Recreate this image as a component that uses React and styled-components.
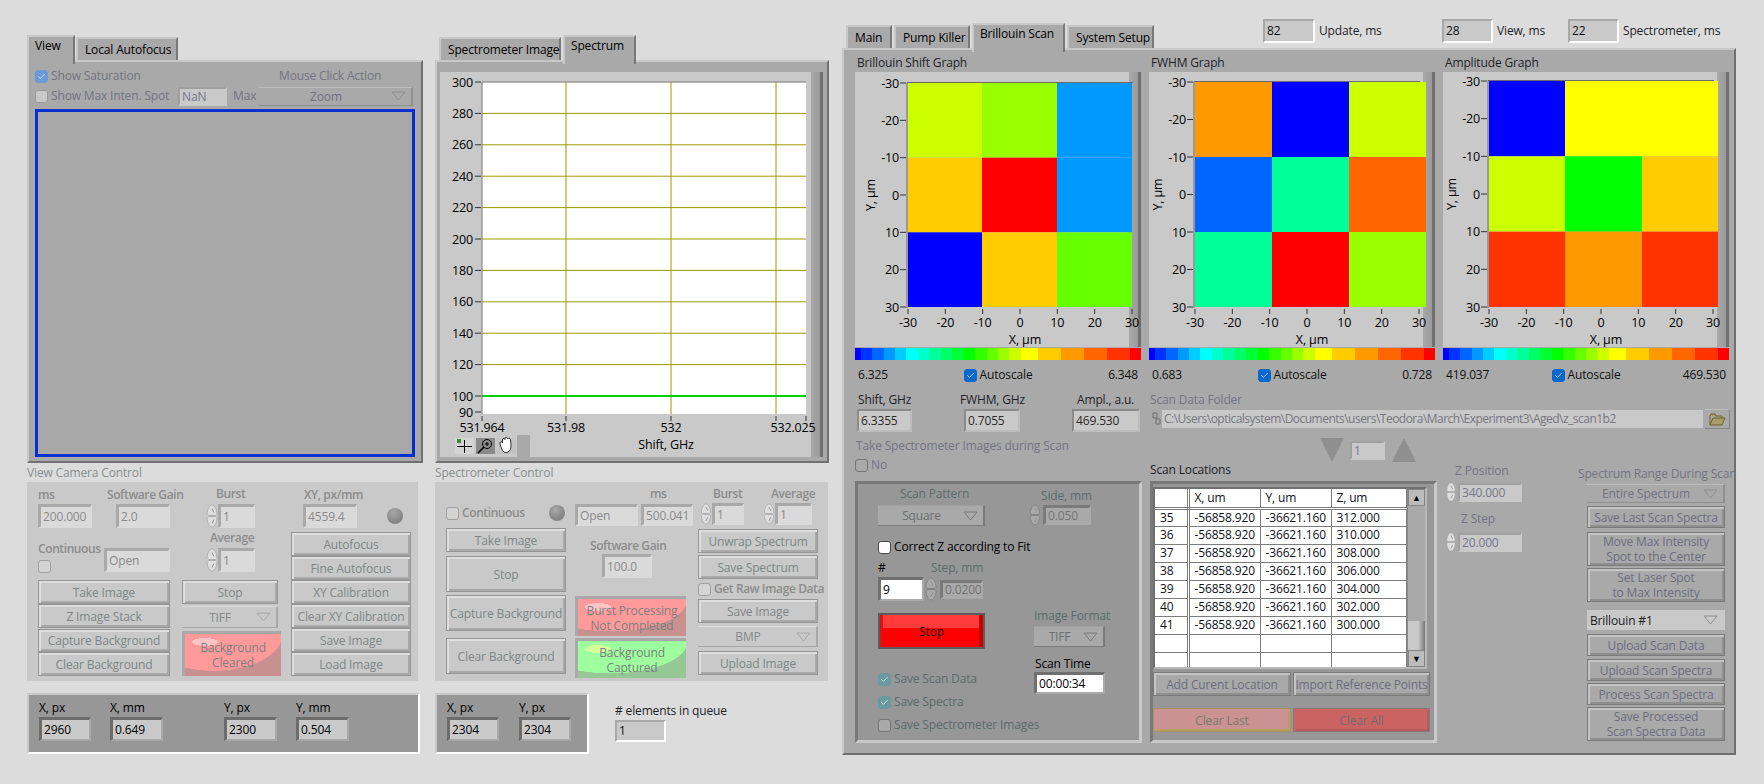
import React from "react";
import styled, { createGlobalStyle } from "styled-components";
import { Check } from "lucide-react";

const Global = createGlobalStyle`
  html, body { margin: 0; padding: 0; background: #dcdcdc; }
  body { font-family: "Open Sans", "Noto Sans", sans-serif; font-size: 12px; letter-spacing: -0.15px; color: #000; }
  * { box-sizing: border-box; }
`;

const Page = styled.div`
  width: 1764px;
  height: 784px;
  display: flex;
  align-items: flex-start;
  overflow: hidden;
`;

const Column = styled.div`
  width: ${(p) => p.$w}px;
  margin-left: ${(p) => p.$ml}px;
  margin-top: ${(p) => p.$mt}px;
  flex: none;
`;

const Stack = styled.div`
  display: flex;
  flex-direction: column;
  flex: none;
  width: ${(p) => (p.$w ? `${p.$w}px` : "auto")};
  gap: ${(p) => p.$gap || 0}px;
  margin-top: ${(p) => p.$mt || 0}px;
  margin-left: ${(p) => p.$ml || 0}px;
`;

const Row = styled.div`
  display: flex;
  flex: none;
  align-items: ${(p) => p.$align || "center"};
  gap: ${(p) => p.$gap || 0}px;
  margin-top: ${(p) => p.$mt || 0}px;
  margin-left: ${(p) => p.$ml || 0}px;
  height: ${(p) => (p.$h ? `${p.$h}px` : "auto")};
`;

/* ---- tabs ---- */
const TabRow = styled.div`
  display: flex;
  align-items: flex-end;
  height: ${(p) => p.$h || 25}px;
  gap: ${(p) => p.$gap ?? 1}px;
  padding-left: ${(p) => p.$pl || 0}px;
  flex: none;
`;

const Tab = styled.div`
  width: ${(p) => p.$w}px;
  height: ${(p) => (p.$active ? 29 : 23)}px;
  margin-bottom: ${(p) => (p.$active ? -4 : 0)}px;
  padding: ${(p) => (p.$active ? "1px 0 0 6px" : "3px 0 0 7px")};
  background: #a9a9a9;
  border-top: 2px solid #c8c8c8;
  border-left: 2px solid #c8c8c8;
  border-right: 2px solid #787878;
  line-height: 16px;
  white-space: nowrap;
  position: relative;
  z-index: ${(p) => (p.$active ? 2 : 0)};
`;

const TabPanel = styled.div`
  height: ${(p) => p.$h}px;
  width: ${(p) => p.$w}px;
  background: #a9a9a9;
  border-top: 2px solid #c8c8c8;
  border-left: 2px solid #c8c8c8;
  border-right: 2px solid #707070;
  border-bottom: 2px solid #707070;
  padding: ${(p) => p.$pad};
`;

/* ---- labels ---- */
const labelColor = {
  dark: "#000",
  soft: "#1f1f28",
  mid: "#747482",
  dim: "#5d6b6b",
  faint: "#8b8b8b",
  strong: "#8c8c8c",
};

const Label = styled.div`
  height: ${(p) => p.$h || 14}px;
  line-height: 14px;
  white-space: nowrap;
  color: ${(p) => labelColor[p.$tone || "dark"]};
  font-weight: ${(p) => (p.$tone === "strong" ? 600 : 400)};
  letter-spacing: ${(p) => (p.$tone === "strong" ? "-0.4px" : "inherit")};
  margin-left: ${(p) => p.$ml || 0}px;
  margin-top: ${(p) => p.$mt || 0}px;
  margin-bottom: ${(p) => p.$mb ?? 2}px;
  width: ${(p) => (p.$w ? `${p.$w}px` : "auto")};
`;

/* ---- numeric fields ---- */
const fieldKinds = {
  faded: { bg: "#dadada", fg: "#8a8a8a", tl: "#a9a9a9", br: "transparent", tw: 3 },
  dark: { bg: "#c9c9c9", fg: "#000", tl: "#6c6c6c", br: "#a8a8a8", tw: 3 },
  status: { bg: "#c9c9c9", fg: "#111", tl: "#a8a8a8", br: "#fff", tw: 2 },
  readout: { bg: "#c9c9c9", fg: "#2a2a2a", tl: "#8b8b8b", br: "#bdbdbd", tw: 2 },
  grayed: { bg: "#c9c9c9", fg: "#77778a", tl: "#a0a0a0", br: "transparent", tw: 2 },
  white: { bg: "#fff", fg: "#000", tl: "#6f6f6f", br: "#a9a9a9", tw: 3 },
  sunk: { bg: "#a9a9a9", fg: "#737373", tl: "#7a7a7a", br: "transparent", tw: 3 },
};

const FieldBox = styled.div`
  width: ${(p) => p.$w}px;
  height: ${(p) => p.$h || 24}px;
  flex: none;
  padding-left: 2px;
  line-height: ${(p) => (p.$h || 24) - fieldKinds[p.$kind].tw - 2}px;
  background: ${(p) => fieldKinds[p.$kind].bg};
  color: ${(p) => fieldKinds[p.$kind].fg};
  border-style: solid;
  border-width: ${(p) => fieldKinds[p.$kind].tw}px 2px 2px ${(p) => fieldKinds[p.$kind].tw}px;
  border-color: ${(p) => fieldKinds[p.$kind].tl} ${(p) => fieldKinds[p.$kind].br} ${(p) => fieldKinds[p.$kind].br} ${(p) => fieldKinds[p.$kind].tl};
  margin-left: ${(p) => p.$ml || 0}px;
  margin-top: ${(p) => p.$mt || 0}px;
  white-space: nowrap;
  overflow: hidden;
`;

const SpinIcon = styled.svg`
  width: 12px;
  height: ${(p) => p.$h || 24}px;
  flex: none;
`;

const Spin = ({ h = 24, fill = "#dedede", edge = "#a4a4a4" }) => (
  <SpinIcon $h={h} viewBox="0 0 12 24">
    <path d="M1 10 C1 5 4 1 6 1 C8 1 11 5 11 10 C11 11 10 11.5 9 11.5 L3 11.5 C2 11.5 1 11 1 10Z" fill={fill} stroke={edge} strokeWidth="0.8" />
    <path d="M1 14 C1 19 4 23 6 23 C8 23 11 19 11 14 C11 13 10 12.5 9 12.5 L3 12.5 C2 12.5 1 13 1 14Z" fill={fill} stroke={edge} strokeWidth="0.8" />
    <path d="M6 4.5 L8 8.5 M6 19.5 L8 15.5" stroke="#8f8f8f" strokeWidth="1" />
  </SpinIcon>
);

/* ---- buttons ---- */
const buttonTones = {
  light: { bg: "#c9c9c9", line: "#959595", hi: "#dedede", lo: "#a9a9a9", fg: "#7f8686" },
  mid: { bg: "#a9a9a9", line: "#7a7a7a", hi: "#c4c4c4", lo: "#8f8f8f", fg: "#6d6d80" },
  pale: { bg: "#ca9292", line: "#a39460", hi: "#ca9292", lo: "#b5a060", fg: "#7b7a70" },
  rose: { bg: "#cb6363", line: "#8c7777", hi: "#cb6363", lo: "#b35a5a", fg: "#736d6d" },
};

const Button = styled.div`
  width: ${(p) => (p.$w ? `${p.$w}px` : "100%")};
  height: ${(p) => p.$h || 24}px;
  flex: none;
  display: flex;
  align-items: center;
  justify-content: center;
  text-align: center;
  line-height: 15px;
  white-space: nowrap;
  margin-top: ${(p) => p.$mt || 0}px;
  background: ${(p) => buttonTones[p.$tone].bg};
  color: ${(p) => buttonTones[p.$tone].fg};
  border: 1px solid ${(p) => buttonTones[p.$tone].line};
  box-shadow: inset 2px 2px 0 ${(p) => buttonTones[p.$tone].hi}, inset -2px -2px 0 ${(p) => buttonTones[p.$tone].lo};
`;

const StopButton = styled.div`
  width: 107px;
  height: 36px;
  margin-top: 12px;
  display: flex;
  align-items: center;
  justify-content: center;
  color: #111;
  border: 2px solid #5c5c5c;
  background: linear-gradient(#ff3b3b 0 13px, #ff0000 13px);
  box-shadow: inset -4px 0 0 #c80000, inset 3px 0 0 #e01010;
`;

const RingBox = styled.div`
  width: ${(p) => (p.$w ? `${p.$w}px` : "100%")};
  height: ${(p) => p.$h || 22}px;
  flex: none;
  display: flex;
  align-items: center;
  justify-content: ${(p) => (p.$start ? "flex-start" : "center")};
  position: relative;
  padding-right: 18px;
  padding-left: ${(p) => (p.$start ? 3 : 0)}px;
  margin-top: ${(p) => p.$mt || 0}px;
  margin-left: ${(p) => p.$ml || 0}px;
  color: ${(p) => p.$fg};
  background: ${(p) => p.$bg};
  border-top: 1px solid ${(p) => p.$hi};
  border-bottom: 1px solid ${(p) => p.$lo};
  border-right: 2px solid ${(p) => p.$lo};
  white-space: nowrap;
`;

const RingArrow = styled.svg`
  position: absolute;
  right: 5px;
  top: 50%;
  margin-top: -5px;
  width: 15px;
  height: 10px;
`;

const ringTones = {
  light: { $fg: "#858a8a", $bg: "#c9c9c9", $hi: "#dcdcdc", $lo: "#a8a8a8" },
  sunk: { $fg: "#6a7070", $bg: "#a9a9a9", $hi: "#a0a0a0", $lo: "#7a7a7a" },
  mid: { $fg: "#737380", $bg: "#a9a9a9", $hi: "#bcbcbc", $lo: "#8f8f8f" },
  value: { $fg: "#1c1c1c", $bg: "#c9c9c9", $hi: "#c9c9c9", $lo: "#c9c9c9" },
};

const Ring = ({ text, tone = "light", ...rest }) => (
  <RingBox {...ringTones[tone]} {...rest}>
    {text}
    <RingArrow viewBox="0 0 15 10">
      <path d="M1 1 L14 1 L7.5 9Z" fill="none" stroke={tone === "value" ? "#8f8f8f" : ringTones[tone].$lo} strokeWidth="1" />
    </RingArrow>
  </RingBox>
);

/* ---- checkboxes ---- */
const boxKinds = {
  off: { bg: "#d4d4d4", line: "#a0a0a0" },
  paleoff: { bg: "#c9c9c9", line: "#9a9a9a" },
  dimon: { bg: "#6a9ad8", line: "#6a9ad8" },
  on: { bg: "#0a67cc", line: "#0a67cc" },
  white: { bg: "#fff", line: "#4a4a4a" },
  teal: { bg: "#6a9a9e", line: "#6a9a9e" },
  sunk: { bg: "#a9a9a9", line: "#767676" },
};

const TickBox = styled.span`
  width: 13px;
  height: 13px;
  flex: none;
  border-radius: 3px;
  display: flex;
  align-items: center;
  justify-content: center;
  margin-right: 3px;
  background: ${(p) => boxKinds[p.$kind].bg};
  border: 1px solid ${(p) => boxKinds[p.$kind].line};
`;

const Tick = ({ kind }) => (
  <TickBox $kind={kind}>
    {["dimon", "on", "teal"].includes(kind) && <Check size={9} color="#e8f0f8" strokeWidth={2} />}
  </TickBox>
);

const Led = styled.span`
  width: 16px;
  height: 16px;
  flex: none;
  border-radius: 50%;
  margin-left: ${(p) => p.$ml || 0}px;
  background: radial-gradient(circle at 40% 30%, #a8a8a8, #858585 65%);
`;

/* ---- panels under the tabs ---- */
const PanelCaption = styled.div`
  height: 14px;
  line-height: 14px;
  margin-top: 3px;
  margin-bottom: 2px;
  color: #8a8f8f;
  white-space: nowrap;
`;

const ControlBox = styled.div`
  width: ${(p) => p.$w}px;
  height: 199px;
  background: #c9c9c9;
  display: flex;
  padding: 5px 0 0 11px;
`;

const CoordBox = styled.div`
  width: ${(p) => p.$w}px;
  height: 61px;
  flex: none;
  display: flex;
  padding: 6px 0 0 10px;
  background: #979797;
  border: 2px solid;
  border-color: #c8c8c8 #fff #fff #c8c8c8;
`;

const ImageDisplay = styled.div`
  width: 380px;
  height: 348px;
  margin-top: 3px;
  background: #a8a8a8;
  border: 3px solid #0030cf;
`;

/* ---- indicator lamps ---- */
const lampTones = {
  pink: { a: "#ff9a9a", b: "#c99090", c: "#ffc4c4" },
  green: { a: "#9dff9d", b: "#96c896", c: "#d4ff9c" },
};

const Lamp = styled.div`
  width: ${(p) => p.$w}px;
  height: ${(p) => p.$h}px;
  flex: none;
  margin-top: ${(p) => p.$mt || 0}px;
  display: flex;
  align-items: center;
  justify-content: center;
  text-align: center;
  line-height: 15px;
  color: #7c8080;
  border-style: solid;
  border-width: 3px 0 0 3px;
  border-color: #a9a9a9;
  background:
    radial-gradient(ellipse 13px 4px at 20px 8px, ${(p) => lampTones[p.$tone].c} 98%, transparent 100%),
    radial-gradient(ellipse 72% 88% at 30% 0%, ${(p) => lampTones[p.$tone].a} 99%, ${(p) => lampTones[p.$tone].b} 100%);
`;

const Field = ({ label, value, w, h, kind = "faded", tone, lm, gapB }) => (
  <Stack $w={w}>
    {label && <Label $tone={tone} $ml={lm} $mb={gapB}>{label}</Label>}
    <FieldBox $w={w} $h={h} $kind={kind}>{value}</FieldBox>
  </Stack>
);

/* ---- left column ---- */
const CameraControls = () => (
  <ControlBox $w={391}>
    <Stack $w={132}>
      <Row $align="flex-start" $gap={24} $mt={1}>
        <Field label="ms" value="200.000" w={54} tone="strong" />
        <Field label="Software Gain" value="2.0" w={54} tone="strong" lm={-9} />
      </Row>
      <Row $align="flex-start" $mt={14} $h={36}>
        <Stack $w={66}>
          <Label $tone="strong" $mb={4}>Continuous</Label>
          <Tick kind="off" />
        </Stack>
        <FieldBox $w={66} $kind="faded" $mt={6}>Open</FieldBox>
      </Row>
      <Stack $mt={2}>
        <Button $tone="light">Take Image</Button>
        <Button $tone="light">Z Image Stack</Button>
        <Button $tone="light" $mt={1} $h={23}>Capture Background</Button>
        <Button $tone="light">Clear Background</Button>
      </Stack>
    </Stack>
    <Stack $w={99} $ml={12}>
      <Label $tone="strong" $ml={34}>Burst</Label>
      <Row $ml={24} $mt={1}><Spin /><FieldBox $w={37} $kind="faded">1</FieldBox></Row>
      <Label $tone="strong" $ml={28} $mt={3}>Average</Label>
      <Row $ml={24} $mt={1}><Spin /><FieldBox $w={37} $kind="faded">1</FieldBox></Row>
      <Button $tone="light" $mt={8} $w={96}>Stop</Button>
      <Ring text="TIFF" $w={96} $mt={2} />
      <Lamp $w={99} $h={45} $tone="pink" $mt={3}>Background<br />Cleared</Lamp>
    </Stack>
    <Stack $w={120} $ml={10}>
      <Label $tone="strong" $ml={13} $mt={1}>XY, px/mm</Label>
      <Row $ml={12}><FieldBox $w={54} $kind="faded">4559.4</FieldBox><Led $ml={30} /></Row>
      <Stack $mt={4}>
        {["Autofocus", "Fine Autofocus", "XY Calibration", "Clear XY Calibration", "Save Image", "Load Image"].map((t) => (
          <Button key={t} $tone="light">{t}</Button>
        ))}
      </Stack>
    </Stack>
  </ControlBox>
);

/* ---- middle column ---- */
const SpectroControls = () => (
  <ControlBox $w={393}>
    <Stack $w={120}>
      <Row $mt={18} $h={16}>
        <Tick kind="off" />
        <Label $tone="strong" $mb={0} $w={87}>Continuous</Label>
        <Led />
      </Row>
      <Button $tone="light" $mt={7}>Take Image</Button>
      <Button $tone="light" $mt={4} $h={36}>Stop</Button>
      <Button $tone="light" $mt={3} $h={36}>Capture Background</Button>
      <Button $tone="light" $mt={7} $h={36}>Clear Background</Button>
    </Stack>
    <Stack $w={118} $ml={9}>
      <Label $tone="strong" $ml={75}>ms</Label>
      <Row $mt={1} $gap={3}>
        <FieldBox $w={63} $h={22} $kind="faded">Open</FieldBox>
        <FieldBox $w={52} $h={22} $kind="faded">500.041</FieldBox>
      </Row>
      <Label $tone="strong" $ml={15} $mt={13} $mb={1}>Software Gain</Label>
      <FieldBox $w={50} $kind="faded" $ml={27}>100.0</FieldBox>
      <Lamp $w={111} $h={40} $tone="pink" $mt={18}>Burst Processing<br />Not Completed</Lamp>
      <Lamp $w={111} $h={40} $tone="green" $mt={2}>Background<br />Captured</Lamp>
    </Stack>
    <Stack $w={120} $ml={5}>
      <Row $align="flex-start">
        <Stack $w={65}>
          <Label $tone="strong" $ml={15}>Burst</Label>
          <Row $ml={2}><Spin h={22} /><FieldBox $w={32} $h={22} $kind="faded">1</FieldBox></Row>
        </Stack>
        <Stack>
          <Label $tone="strong" $ml={8}>Average</Label>
          <Row><Spin h={22} /><FieldBox $w={37} $h={22} $kind="faded">1</FieldBox></Row>
        </Stack>
      </Row>
      <Button $tone="light" $mt={4}>Unwrap Spectrum</Button>
      <Button $tone="light" $mt={2}>Save Spectrum</Button>
      <Row $mt={3} $h={14}>
        <Tick kind="off" />
        <Label $tone="strong" $mb={0}>Get Raw Image Data</Label>
      </Row>
      <Button $tone="light" $mt={3}>Save Image</Button>
      <Ring text="BMP" $h={21} $mt={3} />
      <Button $tone="light" $mt={4}>Upload Image</Button>
    </Stack>
  </ControlBox>
);

const GraphFrame = styled.div`
  width: ${(p) => p.$w}px;
  height: ${(p) => p.$h}px;
  flex: none;
  background: linear-gradient(to left, #707070 3px, #9a9a9a 3px, #a9a9a9 12px, #c9c9c9 12px);
`;

const spectrumY = [300, 280, 260, 240, 220, 200, 180, 160, 140, 120, 100];
const spectrumAt = (i) => 10 + i * 31.4;

const SpectrumChart = () => (
  <GraphFrame $w={383} $h={385}>
    <svg width="383" height="385" fontSize="12.5" fontFamily="Open Sans, sans-serif">
      <rect x="42" y="10" width="324" height="332" fill="#fff" />
      <path d="M42 10 H366 M42 10 V342" stroke="#777" fill="none" />
      {spectrumY.map((v, i) => (
        <g key={v}>
          <line x1="35" x2="41" y1={spectrumAt(i)} y2={spectrumAt(i)} stroke="#333" />
          {i > 0 && i < 10 && <line x1="42" x2="366" y1={spectrumAt(i)} y2={spectrumAt(i)} stroke="#9a9a00" />}
          <text x="33" y={spectrumAt(i) + 4.5} textAnchor="end">{v}</text>
        </g>
      ))}
      <line x1="35" x2="41" y1="340" y2="340" stroke="#333" />
      <text x="33" y="345" textAnchor="end">90</text>
      {[126, 231, 336].map((x) => (
        <line key={x} x1={x} x2={x} y1="10" y2="342" stroke="#9a9a00" />
      ))}
      <line x1="42" x2="366" y1="324" y2="324" stroke="#00d000" strokeWidth="2" />
      {[42, 126, 231, 336, 366].map((x) => (
        <line key={x} x1={x} x2={x} y1="344" y2="349" stroke="#333" />
      ))}
      <text x="42" y="360" textAnchor="middle">531.964</text>
      <text x="126" y="360" textAnchor="middle">531.98</text>
      <text x="231" y="360" textAnchor="middle">532</text>
      <text x="353" y="360" textAnchor="middle">532.025</text>
      <text x="226" y="377" textAnchor="middle">Shift, GHz</text>
      {/* graph palette */}
      <path d="M15 363 H90 V385 H15Z" fill="#a9a9a9" />
      <rect x="15" y="363" width="62" height="22" fill="#c9c9c9" />
      <rect x="15" y="366" width="19" height="16" fill="#d4d4d4" />
      <rect x="36" y="366" width="19" height="16" fill="#8a8a8a" />
      <rect x="57" y="366" width="19" height="16" fill="#c4c4c4" />
      <path d="M24.5 368 V381 M17 374.5 H32" stroke="#000" />
      <rect x="17" y="367" width="4" height="4" fill="#3c8a3c" />
      <circle cx="47" cy="372" r="4.5" fill="none" stroke="#000" />
      <path d="M47 370 V374 M45 372 H49" stroke="#000" />
      <path d="M44 375 L38 381" stroke="#000" strokeWidth="1.6" />
      <path d="M60 372 C60 369 62 369 62.5 371 L62.5 367.5 C63 366 64.5 366 65 367.5 L65 366 C65.5 365 67 365 67.5 366.5 L68 367 C68.5 366 70 366 70.5 367.5 L71 373 C71 378 69 380.5 66 380.5 C63 380.5 62 378 60 372Z" fill="#fff" stroke="#000" strokeWidth="0.8" />
    </svg>
  </GraphFrame>
);

/* ---- right column: intensity graphs ---- */
const Scale = styled.div`
  display: flex;
  height: 12px;
  width: 286px;
  margin-top: 1px;
`;

const ScaleStep = styled.span`
  flex: ${(p) => p.$n} 0 0;
  background: ${(p) => p.$c};
`;

const scaleSteps = [
  ["#0000ff", 0.5], ["#0033ff", 1], ["#0066ff", 1], ["#0099ff", 1], ["#00ccff", 1], ["#00ffff", 1],
  ["#00ffcc", 1], ["#00ff99", 1], ["#00ff66", 1], ["#00ff33", 1], ["#00ff00", 1],
  ["#33ff00", 1], ["#66ff00", 1], ["#99ff00", 1], ["#ccff00", 1], ["#ffff00", 1.5],
  ["#ffcc00", 2], ["#ff9900", 2], ["#ff6600", 2], ["#ff3300", 2], ["#ff0000", 1],
];

const Readings = styled.div`
  width: 286px;
  height: 16px;
  margin-top: 7px;
  padding: 0 3px;
  display: flex;
  justify-content: space-between;
  align-items: center;
  line-height: 16px;
  color: #111;
`;

const Middle = styled.div`
  display: flex;
  align-items: center;
`;

const axisTicks = [-30, -20, -10, 0, 10, 20, 30];

const IntensityGraph = ({ title, cells, low, high, px, pt = 11, splits }) => {
  const px2 = px + 224;
  const pos = (i, a, b) => a + ((b - a) * i) / 6;
  const bottom = 235;
  const ys = [pt, pt + (bottom - pt) / 3, pt + (2 * (bottom - pt)) / 3, bottom];
  return (
    <Stack $w={286}>
      <Label $tone="soft" $ml={2} $mb={0} $mt={6} $h={16}>{title}</Label>
      <GraphFrame $w={286} $h={275}>
        <svg width="286" height="275" fontSize="12.5" fontFamily="Open Sans, sans-serif">
          {cells.map((row, r) =>
            row.map((c, k) => (
              <rect key={`${r}${k}`} x={splits[k]} y={ys[r]} width={splits[k + 1] - splits[k]} height={ys[r + 1] - ys[r]} fill={c} />
            ))
          )}
          <path d={`M${px - 1} ${bottom + 1} V${pt - 0.5} H${px2 + 1}`} stroke="#6a6a6a" fill="none" />
          {axisTicks.map((v, i) => {
            const y = pos(i, pt, bottom);
            const x = pos(i, px, px2);
            return (
              <g key={v}>
                <line x1={px - 8} x2={px - 2} y1={y} y2={y} stroke="#333" />
                <text x={px - 9} y={y + 4.5} textAnchor="end">{v}</text>
                <line x1={x} x2={x} y1={bottom + 2} y2={bottom + 7} stroke="#333" />
                <text x={x} y={bottom + 20} textAnchor="middle">{v}</text>
              </g>
            );
          })}
          <text x={px + 117} y={bottom + 37} textAnchor="middle">X, µm</text>
          <text transform={`translate(${px - 33} ${(pt + bottom) / 2}) rotate(-90)`} textAnchor="middle">Y, µm</text>
        </svg>
      </GraphFrame>
      <Scale>
        {scaleSteps.map(([c, n]) => <ScaleStep key={c} $c={c} $n={n} />)}
      </Scale>
      <Readings>
        <span>{low}</span>
        <Middle><Tick kind="on" />Autoscale</Middle>
        <span>{high}</span>
      </Readings>
    </Stack>
  );
};

const graphs = [
  {
    title: "Brillouin Shift Graph", low: "6.325", high: "6.348", px: 53, pt: 11,
    splits: [53, 127, 202, 277],
    cells: [["#ccff00", "#99ff00", "#0099ff"], ["#ffcc00", "#ff0000", "#0099ff"], ["#0000ff", "#ffcc00", "#66ff00"]],
  },
  {
    title: "FWHM Graph", low: "0.683", high: "0.728", px: 46, pt: 10,
    splits: [46, 123, 200, 277],
    cells: [["#ff9900", "#0000ff", "#ccff00"], ["#0066ff", "#00ff99", "#ff6600"], ["#00ff99", "#ff0000", "#99ff00"]],
  },
  {
    title: "Amplitude Graph", low: "419.037", high: "469.530", px: 46, pt: 9,
    splits: [46, 122, 199, 275],
    cells: [["#0000ff", "#ffff00", "#ffff00"], ["#ccff00", "#00ff00", "#ffcc00"], ["#ff3300", "#ff9900", "#ff3300"]],
  },
];

/* ---- right column: scan area ---- */
const SunkBox = styled.div`
  width: ${(p) => p.$w}px;
  height: 262px;
  flex: none;
  background: #979797;
  border-style: solid;
  border-width: 3px;
  border-color: #787878 #c9c9c9 #c9c9c9 #787878;
  padding: ${(p) => p.$pad};
  display: flex;
`;

const TableFrame = styled.div`
  display: flex;
  width: 274px;
  height: 182px;
  border: 2px solid;
  border-color: #707070 #b8b8b8 #b8b8b8 #707070;
  background: #fff;
  overflow: hidden;
`;

const Table = styled.table`
  border-collapse: collapse;
  table-layout: fixed;
  width: 252px;
  height: 178px;
  flex: none;
  color: #101018;
  th, td {
    height: 18px;
    padding: 0 0 0 5px;
    font-weight: 400;
    text-align: left;
    white-space: nowrap;
    border-right: 1px solid #7c7c7c;
    border-bottom: 1px solid #7c7c7c;
    line-height: 16px;
  }
  th { border-bottom: 3px double #7c7c7c; height: 19px; }
  th:nth-child(1) { width: 33px; border-right: 3px double #7c7c7c; }
  td:nth-child(1) { border-right: 3px double #7c7c7c; }
  th:nth-child(2) { width: 72px; }
  th:nth-child(3) { width: 71px; }
`;

const ScrollBar = styled.div`
  width: 18px;
  flex: none;
  display: flex;
  flex-direction: column;
  background: #a9a9a9;
  border-left: 1px solid #8a8a8a;
`;

const ScrollTrack = styled.div`
  flex: 1;
  display: flex;
  align-items: flex-end;
`;

const ScrollThumb = styled.div`
  width: 100%;
  height: 29px;
  background: linear-gradient(to right, #c9c9c9 60%, #777);
`;

const ScrollArrow = styled.div`
  height: 17px;
  display: flex;
  align-items: center;
  justify-content: center;
  font-size: 9px;
  background: #bcbcbc;
  border: 1px solid #858585;
`;

const scanRows = ["35|312.000", "36|310.000", "37|308.000", "38|306.000", "39|304.000", "40|302.000", "41|300.000"];

const TriangleIcon = styled.svg`
  width: 24px;
  height: 24px;
  flex: none;
  margin-left: ${(p) => p.$ml || 0}px;
`;

const FolderField = styled.div`
  width: 541px;
  height: 18px;
  margin-left: 1px;
  padding-left: 2px;
  line-height: 18px;
  letter-spacing: -0.52px;
  color: #77777f;
  background: #c9c9c9;
  white-space: nowrap;
  overflow: hidden;
`;

const FolderButton = styled.div`
  width: 25px;
  height: 20px;
  margin-left: 2px;
  display: flex;
  align-items: center;
  justify-content: center;
  background: #a9a9a9;
  border-right: 1px solid #858585;
  border-bottom: 1px solid #858585;
  border-top: 1px solid #bdbdbd;
`;

const PathChip = styled.svg`
  width: 11px;
  height: 18px;
  flex: none;
`;

const ScanArea = () => (
  <Row $align="flex-start" $mt={6}>
    <Stack $w={287}>
      <Label $tone="mid" $ml={1} $mt={1} $mb={5}>Take Spectrometer Images during Scan</Label>
      <Row $h={14}>
        <Tick kind="sunk" />
        <Label $tone="mid" $mb={0}>No</Label>
      </Row>
      <Stack $mt={9}>
        <SunkBox $w={287} $pad="3px 0 0 20px">
          <Stack $w={151}>
            <Label $tone="dim" $ml={22}>Scan Pattern</Label>
            <Ring text="Square" tone="sunk" $w={107} $h={21} $mt={2} />
            <Row $mt={14} $h={14}>
              <Tick kind="white" />
              <Label $mb={0}>Correct Z according to Fit</Label>
            </Row>
            <Row $align="flex-start" $mt={7}>
              <Stack $w={46}>
                <Label>#</Label>
                <FieldBox $w={46} $kind="white">9</FieldBox>
              </Stack>
              <Stack $mt={16} $ml={1}><Spin h={24} fill="#a9a9a9" edge="#7c7c7c" /></Stack>
              <Stack>
                <Label $tone="dim" $ml={-6} $mb={5}>Step, mm</Label>
                <FieldBox $w={43} $h={19} $kind="sunk" $ml={3}>0.0200</FieldBox>
              </Stack>
            </Row>
            <StopButton>Stop</StopButton>
            <Row $mt={23} $h={14}><Tick kind="teal" /><Label $tone="dim" $mb={0}>Save Scan Data</Label></Row>
            <Row $mt={9} $h={14}><Tick kind="teal" /><Label $tone="dim" $mb={0}>Save Spectra</Label></Row>
            <Row $mt={9} $h={14}><Tick kind="sunk" /><Label $tone="dim" $mb={0}>Save Spectrometer Images</Label></Row>
          </Stack>
          <Stack $w={80}>
            <Label $tone="dim" $ml={12} $mt={2} $mb={1}>Side, mm</Label>
            <Row>
              <Spin h={22} fill="#a9a9a9" edge="#7c7c7c" />
              <FieldBox $w={48} $h={20} $kind="sunk" $ml={2}>0.050</FieldBox>
            </Row>
            <Label $tone="dim" $ml={5} $mt={83} $mb={3}>Image Format</Label>
            <Ring text="TIFF" tone="sunk" $w={71} $h={21} $ml={5} />
            <Label $ml={6} $mt={10} $mb={1}>Scan Time</Label>
            <Row $ml={5}><FieldBox $w={71} $h={22} $kind="white">00:00:34</FieldBox></Row>
          </Stack>
        </SunkBox>
      </Stack>
    </Stack>
    <Stack $w={287} $ml={8}>
      <Row $h={43} $align="flex-start">
        <Label $tone="soft" $mt={25} $mb={0} $w={170}>Scan Locations</Label>
        <TriangleIcon viewBox="0 0 24 24"><path d="M0 0 H24 L12 24Z" fill="#8f8f8f" /></TriangleIcon>
        <FieldBox $w={35} $h={19} $kind="grayed" $ml={6} $mt={3}>1</FieldBox>
        <TriangleIcon $ml={7} viewBox="0 0 24 24"><path d="M0 24 H24 L12 0Z" fill="#8f8f8f" /></TriangleIcon>
      </Row>
      <SunkBox $w={287} $pad="3px 0 0 0">
        <Stack>
          <TableFrame>
            <Table>
              <thead><tr><th /><th>X, um</th><th>Y, um</th><th>Z, um</th></tr></thead>
              <tbody>
                {scanRows.map((r) => {
                  const [n, z] = r.split("|");
                  return <tr key={n}><td>{n}</td><td>-56858.920</td><td>-36621.160</td><td>{z}</td></tr>;
                })}
                <tr><td /><td /><td /><td /></tr>
                <tr><td /><td /><td /><td /></tr>
              </tbody>
            </Table>
            <ScrollBar>
              <ScrollArrow>▲</ScrollArrow>
              <ScrollTrack><ScrollThumb /></ScrollTrack>
              <ScrollArrow>▼</ScrollArrow>
            </ScrollBar>
          </TableFrame>
          <Row $mt={3} $gap={2}>
            <Button $tone="mid" $w={138}>Add Curent Location</Button>
            <Button $tone="mid" $w={137}>Import Reference Points</Button>
          </Row>
          <Row $mt={12} $gap={2}>
            <Button $tone="pale" $w={138}>Clear Last</Button>
            <Button $tone="rose" $w={137}>Clear All</Button>
          </Row>
        </Stack>
      </SunkBox>
    </Stack>
    <Stack $w={78} $ml={8} $mt={26}>
      <Label $tone="mid" $ml={10} $mb={4}>Z Position</Label>
      <Row><Spin h={20} /><FieldBox $w={64} $h={19} $kind="grayed" $ml={1}>340.000</FieldBox></Row>
      <Label $tone="mid" $ml={16} $mt={10} $mb={6}>Z Step</Label>
      <Row><Spin h={20} /><FieldBox $w={64} $h={19} $kind="grayed" $ml={1}>20.000</FieldBox></Row>
    </Stack>
    <Stack $w={154} $ml={55} $mt={29}>
      <Label $tone="mid" $mb={3}>Spectrum Range During Scan</Label>
      <Stack $w={138} $ml={9}>
        <Ring text="Entire Spectrum" tone="mid" $h={19} />
        <Button $tone="mid" $h={22} $mt={3}>Save Last Scan Spectra</Button>
        <Button $tone="mid" $h={34} $mt={4}>Move Max Intensity<br />Spot to the Center</Button>
        <Button $tone="mid" $h={34} $mt={2}>Set Laser Spot<br />to Max Intensity</Button>
        <Ring text="Brillouin #1" tone="value" $h={20} $mt={8} $start />
        <Button $tone="mid" $h={22} $mt={4}>Upload Scan Data</Button>
        <Button $tone="mid" $h={22} $mt={3}>Upload Scan Spectra</Button>
        <Button $tone="mid" $h={22} $mt={2}>Process Scan Spectra</Button>
        <Button $tone="mid" $h={34} $mt={2}>Save Processed<br />Scan Spectra Data</Button>
      </Stack>
    </Stack>
  </Row>
);

export default function App() {
  return (
    <Page>
      <Global />
      <Column $w={396} $ml={27} $mt={35}>
        <TabRow>
          <Tab $w={48} $active>View</Tab>
          <Tab $w={102}>Local Autofocus</Tab>
        </TabRow>
        <TabPanel $w={396} $h={403} $pad="6px 0 0 6px">
          <Row $h={14} $mt={1}>
            <Tick kind="dimon" />
            <Label $tone="mid" $mb={0} $w={228}>Show Saturation</Label>
            <Label $tone="mid" $mb={0}>Mouse Click Action</Label>
          </Row>
          <Row $mt={3} $h={20}>
            <Tick kind="paleoff" />
            <Label $tone="mid" $mb={0} $w={127}>Show Max Inten. Spot</Label>
            <FieldBox $w={49} $h={19} $kind="grayed">NaN</FieldBox>
            <Label $tone="mid" $mb={0} $ml={6} $w={26}>Max</Label>
            <Ring text="Zoom" tone="mid" $w={154} $h={19} />
          </Row>
          <ImageDisplay />
        </TabPanel>
        <PanelCaption>View Camera Control</PanelCaption>
        <CameraControls />
        <Row $mt={12}>
          <CoordBox $w={393}>
            <Field label="X, px" value="2960" w={52} kind="dark" />
            <Stack $ml={19}><Field label="X, mm" value="0.649" w={53} kind="dark" /></Stack>
            <Stack $ml={61}><Field label="Y, px" value="2300" w={53} kind="dark" /></Stack>
            <Stack $ml={19}><Field label="Y, mm" value="0.504" w={53} kind="dark" /></Stack>
          </CoordBox>
        </Row>
      </Column>

      <Column $w={394} $ml={12} $mt={35}>
        <TabRow $pl={4} $gap={2}>
          <Tab $w={122}>Spectrometer Image</Tab>
          <Tab $w={73} $active>Spectrum</Tab>
        </TabRow>
        <TabPanel $w={394} $h={403} $pad="10px 0 0 3px">
          <SpectrumChart />
        </TabPanel>
        <PanelCaption>Spectrometer Control</PanelCaption>
        <SpectroControls />
        <Row $mt={12} $align="flex-start">
          <CoordBox $w={154}>
            <Field label="X, px" value="2304" w={52} kind="dark" />
            <Stack $ml={20}><Field label="Y, px" value="2304" w={52} kind="dark" /></Stack>
          </CoordBox>
          <Stack $ml={26} $mt={11}>
            <Label $tone="soft">&#35; elements in queue</Label>
            <FieldBox $w={51} $h={22} $kind="status">1</FieldBox>
          </Stack>
        </Row>
      </Column>

      <Column $w={894} $ml={13} $mt={19}>
        <Row $align="flex-start" $h={29}>
          <TabRow $h={29} $pl={4} $gap={2}>
            <Tab $w={46}>Main</Tab>
            <Tab $w={76}>Pump Killer</Tab>
            <Tab $w={93} $active>Brillouin Scan</Tab>
            <Tab $w={87}>System Setup</Tab>
          </TabRow>
          <Row $ml={109} $h={24}>
            <FieldBox $w={52} $kind="status">82</FieldBox>
            <Label $tone="soft" $ml={4} $mb={0} $w={123}>Update, ms</Label>
            <FieldBox $w={51} $kind="status">28</FieldBox>
            <Label $tone="soft" $ml={4} $mb={0} $w={71}>View, ms</Label>
            <FieldBox $w={51} $kind="status">22</FieldBox>
            <Label $tone="soft" $ml={4} $mb={0}>Spectrometer, ms</Label>
          </Row>
        </Row>
        <TabPanel $w={894} $h={707} $pad="0 0 0 11px">
          <Row $align="flex-start" $gap={8}>
            {graphs.map((g) => <IntensityGraph key={g.title} {...g} />)}
          </Row>
          <Row $align="flex-start" $mt={10}>
            <Stack $w={295}>
              <Row $align="flex-start">
                <Stack $ml={2}><Field label="Shift, GHz" value="6.3355" w={55} h={23} kind="readout" tone="soft" gapB={2} lm={1} /></Stack>
                <Stack $ml={52}><Field label="FWHM, GHz" value="0.7055" w={56} h={23} kind="readout" tone="soft" gapB={2} lm={-4} /></Stack>
                <Stack $ml={52}><Field label="Ampl., a.u." value="469.530" w={68} h={23} kind="readout" tone="soft" gapB={2} lm={5} /></Stack>
              </Row>
            </Stack>
            <Stack>
              <Label $tone="mid">Scan Data Folder</Label>
              <Row $h={20}>
                <PathChip viewBox="0 0 11 18">
                  <path d="M3 3 H7 V8 H3Z M6 9 H10 V14 H6Z" fill="none" stroke="#6f6f6f" />
                </PathChip>
                <FolderField>C:\Users\opticalsystem\Documents\users\Teodora\March\Experiment3\Aged\z_scan1b2</FolderField>
                <FolderButton>
                  <svg width="17" height="13" viewBox="0 0 17 13">
                    <path d="M1 3 L1 12 L13 12 L16 5 L4 5 L1 12 M1 3 L2 1 L6 1 L7 3 L13 3 L13 5" fill="#a89e68" stroke="#6a6230" />
                  </svg>
                </FolderButton>
              </Row>
            </Stack>
          </Row>
          <ScanArea />
        </TabPanel>
      </Column>
    </Page>
  );
}
